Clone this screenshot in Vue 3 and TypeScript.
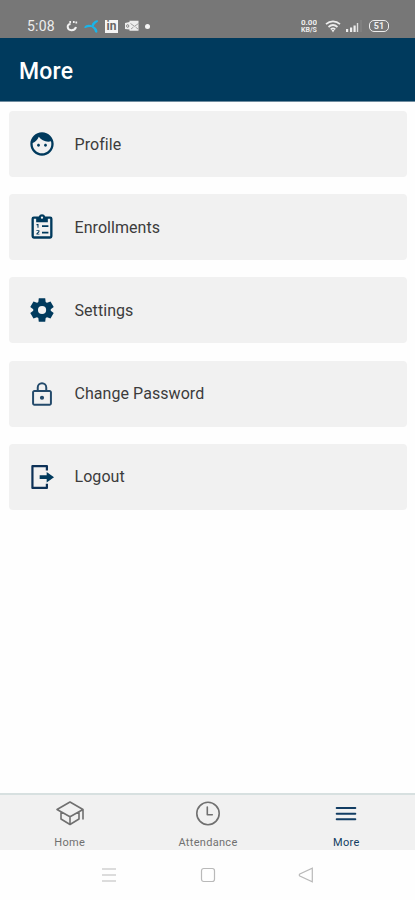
<script setup lang="ts">
import { ref } from 'vue'

interface MenuItem {
  id: string
  label: string
}

const items: MenuItem[] = [
  { id: 'profile', label: 'Profile' },
  { id: 'enrollments', label: 'Enrollments' },
  { id: 'settings', label: 'Settings' },
  { id: 'password', label: 'Change Password' },
  { id: 'logout', label: 'Logout' },
]

const tabs: MenuItem[] = [
  { id: 'home', label: 'Home' },
  { id: 'attendance', label: 'Attendance' },
  { id: 'more', label: 'More' },
]

const activeTab = ref('more')
</script>

<template>
  <div class="screen">
    <div class="status">
      <div class="status-left">
        <span class="time">5:08</span>
        <svg class="i-smile" width="12" height="12" viewBox="0 0 12 12" fill="none" stroke="#f2f2f2" stroke-width="2">
          <path d="M4.600 4C.6 4 .6 10 5.400 10.200c2.600.1 4-1 4.600-3.200" />
          <path d="M4.200 1v2M7.800 1v2M10.300 1.500v2" stroke-width="1.700" />
        </svg>
        <svg class="i-fan" width="15" height="13" viewBox="0 0 15 13" fill="#19b5ea">
          <path d="M7.600 6.400C7.500 3.400 9.800.8 13.200.2c1.200.3 1 1.500 0 2C11 3.300 10.200 5 9.500 6.700z" />
          <path d="M8.400 5.800C5.600 4 2 4.500.3 6.900c-.1 1.200 1 1.300 1.700.9 2.200-1.200 4.200-1 6.300-.5z" />
          <path d="M8.400 6c2.800.6 5.200 2.800 5 6-.7 1.200-2.200.9-2.500-.4C10.500 9.800 9.600 8.500 8 7.500z" />
        </svg>
        <span class="linked">in</span>
        <svg class="i-mail" width="14" height="12" viewBox="0 0 14 12">
          <path d="M0 3 4.500 2V.8h9v10h-9V9.500L0 9z" fill="#ededed" />
          <ellipse cx="2.700" cy="6" rx="1.100" ry="1.400" fill="none" stroke="#888" />
          <path d="m5.500 3.500 4 2.800 4-2.800M6 9l2.500-2M13 9l-2.500-2" fill="none" stroke="#8c8c8c" stroke-width=".8" />
        </svg>
        <span class="dot"></span>
      </div>
      <div class="status-right">
        <div class="speed"><span>0.00</span><span class="unit">KB/S</span></div>
        <svg class="i-wifi" width="16" height="13" viewBox="0 0 16 13" fill="none" stroke="#ededed" stroke-width="1.700">
          <path d="M1 4.200c4-3.700 10-3.700 14 0M3.500 7c2.700-2.400 6.300-2.400 9 0M5.700 9.300c1.400-1.200 3.200-1.200 4.600 0" />
          <path d="M6.500 10h3L8 12.400z" fill="#ededed" stroke="none" />
        </svg>
        <svg class="i-signal" width="16" height="12" viewBox="0 0 16 12">
          <path d="M0 9h2.200v3H0zM4 7.500h2.200V12H4zM7.500 5.500h2.200V12H7.500z" fill="#ededed" />
          <path d="M10.800 3h1.400v9h-1.400z" fill="#ddd" />
          <path d="M14.500 0h1v12h-1z" fill="#8a8a8a" />
        </svg>
        <div class="battery"><span>51</span></div>
      </div>
    </div>

    <header class="header"><h1>More</h1></header>

    <main class="list">
      <button v-for="item in items" :key="item.id" class="card" type="button">
        <svg class="card-icon" viewBox="0 0 24 24" fill="#003a5d">
          <path
            v-if="item.id === 'profile'"
            d="M9 11.750c-.69 0-1.250.56-1.250 1.250s.56 1.250 1.250 1.250 1.250-.56 1.250-1.250-.56-1.250-1.250-1.250zm6 0c-.69 0-1.250.56-1.250 1.250s.56 1.250 1.250 1.250 1.250-.56 1.250-1.250-.56-1.250-1.250-1.250zM12 2C6.480 2 2 6.480 2 12s4.480 10 10 10 10-4.480 10-10S17.520 2 12 2zm0 18c-4.410 0-8-3.590-8-8 0-.29.020-.58.050-.86 2.360-1.050 4.230-2.980 5.210-5.370C11.070 8.330 14.050 10 17.420 10c.78 0 1.530-.09 2.250-.26.210.71.330 1.470.330 2.260 0 4.410-3.590 8-8 8z"
          />
          <template v-else-if="item.id === 'enrollments'">
            <path d="M19 3h-4.200a3 3 0 0 0-5.600 0H5a2 2 0 0 0-2 2v15a2 2 0 0 0 2 2h14a2 2 0 0 0 2-2V5a2 2 0 0 0-2-2zM12 2.900a1 1 0 1 1 0 2 1 1 0 0 1 0-2zM5 5h2v3h10V5h2v15H5z" />
            <path d="M12 10.500h5.500v1.500H12zM12 16h5.500v1.500H12zM7.300 9.500h1.700v3.200h-.9v-2.300h-.8zM7.200 14.700h2.600v1.600l-1.500 1.400h1.500v.8H7.200v-.9l1.700-1.700v-.4H7.200z" />
          </template>
          <path
            v-else-if="item.id === 'settings'"
            d="M9.250 22l-.4-3.200a4 4 0 0 1-.61-.3 8 8 0 0 1-.57-.38L4.700 19.380 1.950 14.630l2.570-1.950a2.400 2.400 0 0 1-.020-.34v-.67c0-.11.010-.23.020-.35L1.950 9.380 4.700 4.630l2.980 1.250c.18-.13.370-.26.570-.38.200-.12.400-.22.600-.3l.4-3.200h5.500l.4 3.200c.22.080.420.180.610.3.190.12.380.25.560.38l2.980-1.250 2.750 4.750-2.580 1.940c.020.120.030.240.030.350v.68c0 .11-.020.220-.050.340l2.580 1.940-2.750 4.750-2.950-1.250a8 8 0 0 1-.58.380c-.2.120-.4.220-.6.300l-.4 3.200zM12.050 15.500a3.500 3.500 0 1 0 0-7 3.500 3.500 0 0 0 0 7z"
          />
          <path
            v-else-if="item.id === 'password'"
            fill="#234a6b"
            d="M18 8.500h-1.500V6.500a4.500 4.500 0 0 0-9 0v2H5.500c-1.100 0-2 .9-2 2v9.500c0 1.100.9 2 2 2h13c1.100 0 2-.9 2-2v-9.500c0-1.100-.9-2-2-2zM9.200 6.500a2.800 2.800 0 0 1 5.600 0v2H9.200zM18.800 20.400H5.200V10.200h13.600zM12 17a1.800 1.800 0 1 0 0-3.600 1.800 1.800 0 0 0 0 3.600z"
          />
          <template v-else>
            <path d="M16.200 6.500V2.600H3.800v18.800h12.400v-3.600" fill="none" stroke="#0d3157" stroke-width="1.900" stroke-linejoin="round" />
            <path d="M10 10.500h6V7.700l6.300 4.500-6.300 4.500v-2.900h-6z" />
          </template>
        </svg>
        <span class="card-label">{{ item.label }}</span>
      </button>
    </main>

    <nav class="tabs">
      <button
        v-for="tab in tabs"
        :key="tab.id"
        type="button"
        class="tab"
        :class="{ active: tab.id === activeTab }"
        @click="activeTab = tab.id"
      >
        <svg class="tab-icon" width="30" height="28" viewBox="0 0 30 28" fill="none" stroke="currentColor" stroke-width="1.600" stroke-linejoin="round" stroke-linecap="round">
          <path v-if="tab.id === 'home'" d="M2 10.500 15 3 28 10.500 15 17.700zM6 13v7l9 5.500 9-5.500v-7M15 17.700v7.800M28 10.500V20" />
          <template v-else-if="tab.id === 'attendance'">
            <circle cx="15" cy="14.500" r="11.200" />
            <path d="M14.300 8v7.800h5" />
          </template>
          <path v-else d="M5.700 9h18.600M5.700 14.700h18.600M5.700 20.300h18.600" stroke-width="2" />
        </svg>
        <span class="tab-label">{{ tab.label }}</span>
      </button>
    </nav>

    <div class="system-nav">
      <svg width="16" height="16" viewBox="0 0 16 16"><path d="M1 2h14M1 8h14M1 14h14" /></svg>
      <svg width="16" height="16" viewBox="0 0 16 16"><rect x="1.500" y="1.500" width="13" height="13" rx="2.200" /></svg>
      <svg width="16" height="16" viewBox="0 0 16 16"><path d="M14.300 1.200v13.600L1.800 9Q.7 8 1.800 7z" /></svg>
    </div>
  </div>
</template>

<style>
body {
  background: #fff;
}
</style>

<style scoped>
.screen {
  width: 100%;
  height: 900px;
  display: flex;
  flex-direction: column;
  overflow: hidden;
  background: #fefefe;
  font-family: Roboto, sans-serif;
}

button {
  border: 0;
  padding: 0;
  font: inherit;
  text-align: left;
}

svg {
  display: block;
  flex: none;
}

.status {
  height: 37.500px;
  box-sizing: border-box;
  padding: 15px 26px 0 27px;
  display: flex;
  justify-content: space-between;
  background: #777;
  color: #ededed;
}

.status-left,
.status-right {
  display: flex;
  align-items: center;
  height: 22px;
}

.time {
  width: 28px;
  font-size: 14px;
  line-height: 22px;
  letter-spacing: 0.200px;
}

.i-smile {
  margin-left: 11px;
}

.i-fan {
  margin-left: 6px;
}

.linked {
  width: 13px;
  height: 13px;
  margin-left: 6px;
  background: #f5f5f5;
  color: #666;
  font-size: 12px;
  font-weight: 700;
  line-height: 13px;
  text-align: center;
}

.i-mail {
  margin-left: 7px;
}

.dot {
  width: 5px;
  height: 5px;
  margin-left: 6px;
  border-radius: 50%;
  background: #f5f5f5;
}

.speed {
  width: 20px;
  display: flex;
  flex-direction: column;
  align-items: center;
  gap: 1px;
  font-size: 8px;
  font-weight: 700;
  line-height: 7px;
}

.speed span {
  height: 7px;
  overflow: hidden;
}

.unit {
  font-size: 7px;
}

.i-wifi {
  margin-left: 6px;
}

.i-signal {
  margin-left: 5px;
}

.battery {
  width: 20px;
  height: 12px;
  box-sizing: border-box;
  margin-left: 7px;
  border: 1.500px solid #ededed;
  border-radius: 5px;
  font-size: 9px;
  font-weight: 700;
  line-height: 10px;
  text-align: center;
}

.header {
  height: 64.500px;
  box-sizing: border-box;
  padding: 5px 19px 0;
  display: flex;
  align-items: center;
  background: #003a5d;
  border-bottom: 1px solid #6f8c9f;
}

.header h1 {
  margin: 0;
  color: #fff;
  font-size: 23px;
  font-weight: 500;
  line-height: 28px;
  letter-spacing: 0.200px;
}

.list {
  flex: 1;
  padding: 9px 8px 0 9px;
  display: flex;
  flex-direction: column;
  gap: 17.200px;
}

.card {
  height: 66px;
  flex: none;
  padding-left: 19px;
  display: flex;
  align-items: center;
  border-radius: 4px;
  background: #f1f1f1;
}

.card-icon {
  width: 28px;
  height: 28px;
}

.card-label {
  margin-left: 18.500px;
  padding-top: 1px;
  color: #3c3c3c;
  font-size: 16px;
  line-height: 22px;
  letter-spacing: 0.060px;
}

.tabs {
  height: 57px;
  box-sizing: border-box;
  display: grid;
  grid-template-columns: repeat(3, 1fr);
  border-top: 2px solid #d7e0e0;
  background: #f1f1f1;
}

.tab {
  display: flex;
  flex-direction: column;
  align-items: center;
  padding: 4px 0 0 1px;
  background: none;
  color: #707070;
}

.tab.active {
  color: #123d63;
}

.tab-label {
  margin-top: 9px;
  font-size: 11px;
  line-height: 13px;
  letter-spacing: 0.300px;
}

.system-nav {
  height: 50px;
  padding: 0 101px;
  display: flex;
  align-items: center;
  justify-content: space-between;
  fill: none;
  stroke: #b9b9b9;
  stroke-width: 1.200;
}
</style>
